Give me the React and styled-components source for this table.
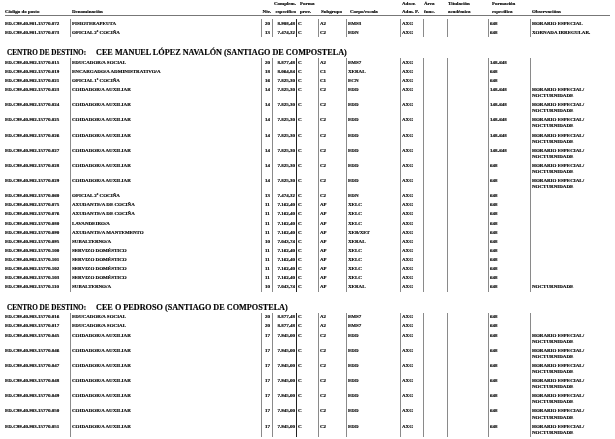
import React from "react";
import styled, { createGlobalStyle } from "styled-components";

const COLS = "65px 191px 11px 24px 22px 28px 54px 23px 24px 41px 42px 1fr";

const ESP = ["HORARIO ESPECIAL/", "NOCTURNIDADE"];

const sections = [
  {
    title: null,
    rows: [
      ["ED.C99.40.901.15770.072", "FISIOTERAPEUTA", "20", "8.908,48", "A2", "EMS3", "648", ["HORARIO ESPECIAL"]],
      ["ED.C99.40.901.15770.073", "OFICIAL 2ª COCIÑA", "13", "7.474,32", "C2", "EDN", "648", ["XORNADA IRREGULAR."]],
    ],
  },
  {
    title: "CEE MANUEL LÓPEZ NAVALÓN (SANTIAGO DE COMPOSTELA)",
    rows: [
      ["ED.C99.40.902.15770.015", "EDUCADOR/A SOCIAL", "20", "8.877,48", "A2", "EMS7", "148-648", []],
      ["ED.C99.40.902.15770.019", "ENCARGADO/A ADMINISTRATIVO/A", "18", "8.064,84", "C1", "XERAL", "648", []],
      ["ED.C99.40.902.15770.021", "OFICIAL 1ª COCIÑA", "16", "7.825,30", "C1", "ECN", "648", []],
      ["ED.C99.40.902.15770.023", "COIDADOR/A AUXILIAR", "14", "7.825,30", "C2", "EDD", "148-648", ESP],
      ["ED.C99.40.902.15770.024", "COIDADOR/A AUXILIAR", "14", "7.825,30", "C2", "EDD", "148-648", ESP],
      ["ED.C99.40.902.15770.025", "COIDADOR/A AUXILIAR", "14", "7.825,30", "C2", "EDD", "148-648", ESP],
      ["ED.C99.40.902.15770.026", "COIDADOR/A AUXILIAR", "14", "7.825,30", "C2", "EDD", "148-648", ESP],
      ["ED.C99.40.902.15770.027", "COIDADOR/A AUXILIAR", "14", "7.825,30", "C2", "EDD", "148-648", ESP],
      ["ED.C99.40.902.15770.028", "COIDADOR/A AUXILIAR", "14", "7.825,30", "C2", "EDD", "648", ESP],
      ["ED.C99.40.902.15770.029", "COIDADOR/A AUXILIAR", "14", "7.825,30", "C2", "EDD", "648", ESP],
      ["ED.C99.40.902.15770.060", "OFICIAL 2ª COCIÑA", "13", "7.474,32", "C2", "EDN", "648", []],
      ["ED.C99.40.902.15770.075", "AXUDANTE/A DE COCIÑA", "11", "7.162,40", "AP", "XELC", "648", []],
      ["ED.C99.40.902.15770.076", "AXUDANTE/A DE COCIÑA", "11", "7.162,40", "AP", "XELC", "648", []],
      ["ED.C99.40.902.15770.080", "LAVANDEIRO/A", "11", "7.162,40", "AP", "XELC", "648", []],
      ["ED.C99.40.902.15770.090", "AXUDANTE/A MANTEMENTO", "11", "7.162,40", "AP", "XEB/XET", "648", []],
      ["ED.C99.40.902.15770.095", "SUBALTERNO/A", "10", "7.043,74", "AP", "XERAL", "648", []],
      ["ED.C99.40.902.15770.100", "SERVIZO DOMÉSTICO", "11", "7.162,40", "AP", "XELC", "648", []],
      ["ED.C99.40.902.15770.101", "SERVIZO DOMÉSTICO", "11", "7.162,40", "AP", "XELC", "648", []],
      ["ED.C99.40.902.15770.102", "SERVIZO DOMÉSTICO", "11", "7.162,40", "AP", "XELC", "648", []],
      ["ED.C99.40.902.15770.103", "SERVIZO DOMÉSTICO", "11", "7.162,40", "AP", "XELC", "648", []],
      ["ED.C99.40.902.15770.110", "SUBALTERNO/A", "10", "7.043,74", "AP", "XERAL", "648", ["NOCTURNIDADE"]],
    ],
  },
  {
    title: "CEE O PEDROSO (SANTIAGO DE COMPOSTELA)",
    rows: [
      ["ED.C99.40.903.15770.016", "EDUCADOR/A SOCIAL", "20", "8.877,48", "A2", "EMS7", "648", []],
      ["ED.C99.40.903.15770.017", "EDUCADOR/A SOCIAL", "20", "8.877,48", "A2", "EMS7", "648", []],
      ["ED.C99.40.903.15770.045", "COIDADOR/A AUXILIAR", "17", "7.945,00", "C2", "EDD", "648", ESP],
      ["ED.C99.40.903.15770.046", "COIDADOR/A AUXILIAR", "17", "7.945,00", "C2", "EDD", "648", ESP],
      ["ED.C99.40.903.15770.047", "COIDADOR/A AUXILIAR", "17", "7.945,00", "C2", "EDD", "648", ESP],
      ["ED.C99.40.903.15770.048", "COIDADOR/A AUXILIAR", "17", "7.945,00", "C2", "EDD", "648", ESP],
      ["ED.C99.40.903.15770.049", "COIDADOR/A AUXILIAR", "17", "7.945,00", "C2", "EDD", "648", ESP],
      ["ED.C99.40.903.15770.050", "COIDADOR/A AUXILIAR", "17", "7.945,00", "C2", "EDD", "648", ESP],
      ["ED.C99.40.903.15770.051", "COIDADOR/A AUXILIAR", "17", "7.945,00", "C2", "EDD", "648", ESP],
    ],
  },
];

const GlobalStyle = createGlobalStyle`
  html, body {
    margin: 0;
    padding: 0;
    background: #fff;
  }
  body {
    font-family: "Liberation Serif", "Times New Roman", serif;
    color: #000;
  }
`;

// the scanned page is grey only, so keep the text free of colour fringes
const Page = styled.div`
  width: 615px;
  height: 439px;
  overflow: hidden;
  padding: 0 5px;
  box-sizing: border-box;
  background: #fff;
  filter: grayscale(1);
`;

const Header = styled.div`
  display: grid;
  grid-template-columns: ${COLS};
  align-items: end;
  height: 16px;
  border-bottom: 1px solid #777;
  box-sizing: border-box;
  margin-bottom: 3px;
`;

const HeadCell = styled.div`
  font-size: 5px;
  font-weight: bold;
  line-height: 8px;
  white-space: nowrap;
  -webkit-text-stroke: 0.15px #000;
  text-align: ${(p) => p.$align || "left"};
  padding-left: ${(p) => p.$indent || 0}px;
  padding-right: ${(p) => p.$pr || 0}px;
  direction: ${(p) => (p.$align === "right" ? "rtl" : "ltr")};
  span {
    direction: ltr;
    unicode-bidi: embed;
  }
`;

const Section = styled.section`
  display: flex;
  flex-direction: column;
`;

const Title = styled.div`
  display: flex;
  align-items: baseline;
  margin: 11px 0 0;
  padding-left: 2px;
  line-height: 9px;
  font-weight: bold;
  white-space: nowrap;
  -webkit-text-stroke: 0.15px #000;
  b {
    width: 89px;
    font-size: 7.2px;
  }
  span {
    font-size: 8.2px;
  }
`;

const Row = styled.div`
  display: grid;
  grid-template-columns: ${COLS};
`;

const Cell = styled.div`
  font-size: 5px;
  font-weight: bold;
  line-height: 6.1px;
  -webkit-text-stroke: 0.15px #000;
  padding: 1.5px ${(p) => (p.$align === "right" ? 1 : 0)}px 1.5px
    ${(p) => (p.$first ? 0 : p.$pl ?? 1)}px;
  white-space: nowrap;
  text-align: ${(p) => p.$align || "left"};
  border-left: ${(p) =>
    p.$first ? "none" : p.$dark ? "1px solid #222" : "1px solid #8a8a8a"};
  box-sizing: border-box;
`;

const ObsLine = styled.div`
  line-height: 6.1px;
`;

const TableRow = ({ r }) => {
  const [code, denom, niv, comp, sub, corpo, form, obs] = r;
  return (
    <Row>
      <Cell $first>{code}</Cell>
      <Cell>{denom}</Cell>
      <Cell $pl={3}>{niv}</Cell>
      <Cell $align="right">{comp}</Cell>
      <Cell $dark>C</Cell>
      <Cell>{sub}</Cell>
      <Cell>{corpo}</Cell>
      <Cell>AXG</Cell>
      <Cell />
      <Cell />
      <Cell>{form}</Cell>
      <Cell>
        {obs.map((o) => (
          <ObsLine key={o}>{o}</ObsLine>
        ))}
      </Cell>
    </Row>
  );
};

export default function App() {
  return (
    <>
      <GlobalStyle />
      <Page>
        <Header>
          <HeadCell>Código do posto</HeadCell>
          <HeadCell $indent={2}>Denominación</HeadCell>
          <HeadCell $align="right" $pr={1}>
            <span>Niv.</span>
          </HeadCell>
          <HeadCell $align="right">
            <span>
              Complem.
              <br />
              específico
            </span>
          </HeadCell>
          <HeadCell $indent={4}>
            Forma
            <br />
            prov.
          </HeadCell>
          <HeadCell $indent={3}>Subgrupo</HeadCell>
          <HeadCell $indent={4}>Corpo/escala</HeadCell>
          <HeadCell $indent={2}>
            Adscr.
            <br />
            Adm. P.
          </HeadCell>
          <HeadCell $indent={1}>
            Área
            <br />
            func.
          </HeadCell>
          <HeadCell $indent={1}>
            Titulación
            <br />
            académica
          </HeadCell>
          <HeadCell $indent={4}>
            Formación
            <br />
            específica
          </HeadCell>
          <HeadCell $indent={2}>Observacións</HeadCell>
        </Header>
        {sections.map((s, i) => (
          <Section key={i}>
            {s.title && (
              <Title>
                <b>CENTRO DE DESTINO:</b>
                <span>{s.title}</span>
              </Title>
            )}
            {s.rows.map((r) => (
              <TableRow key={r[0]} r={r} />
            ))}
          </Section>
        ))}
      </Page>
    </>
  );
}
